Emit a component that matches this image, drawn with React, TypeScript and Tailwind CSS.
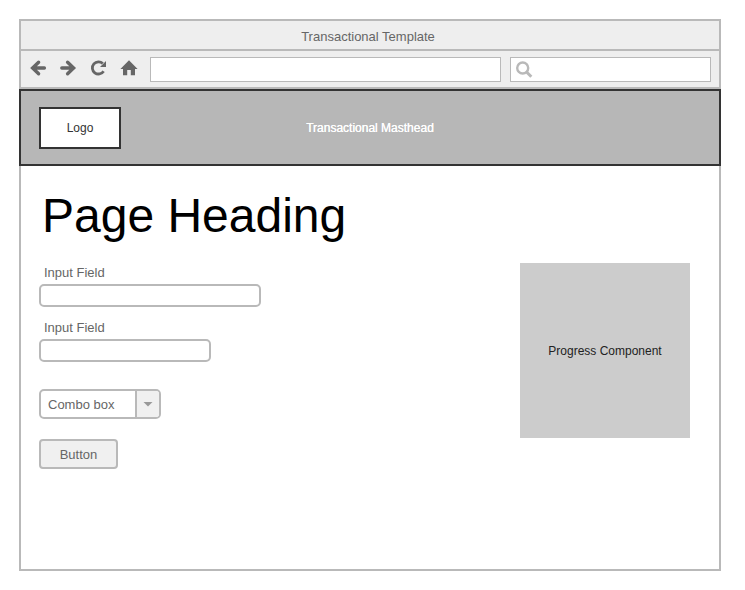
import React from "react";

const field = "block h-[23px] rounded-[5px] border-2 border-[#b9b9b9] bg-white px-2 text-[13px] text-[#666] outline-none";

function ToolButton({ label, children }: { label: string; children: React.ReactNode }) {
  return (
    <button type="button" aria-label={label} className="flex size-5 items-center justify-center text-[#666]">
      {children}
    </button>
  );
}

export default function App() {
  return (
    <div className="flex min-h-screen flex-col bg-white pt-[19px] pr-6 pb-[19px] pl-[19px] font-['Liberation_Sans',Arial,sans-serif] text-[13px] text-[#666]">
      <div className="flex h-8 items-center justify-center border-2 border-[#b9b9b9] bg-[#eee] pt-1 pr-1">
        Transactional Template
      </div>
      <nav className="flex items-start border-x-2 border-b-2 border-[#b9b9b9] bg-[#eee] pt-1.5 pr-2 pb-[5px] pl-[7px]">
        <div className="mr-3 flex gap-2.5">
          <ToolButton label="Back">
            <svg width="20" height="20" viewBox="0 0 20 20" fill="none" stroke="currentColor" strokeWidth="3.4">
              <path d="M16.4 11H5M10.6 5.2L4.6 11L10.6 16.8" strokeLinecap="round" />
            </svg>
          </ToolButton>
          <ToolButton label="Forward">
            <svg width="20" height="20" viewBox="0 0 20 20" fill="none" stroke="currentColor" strokeWidth="3.4">
              <path d="M3.8 11H15M9.6 5.2L15.6 11L9.6 16.8" strokeLinecap="round" />
            </svg>
          </ToolButton>
          <ToolButton label="Reload">
            <svg width="20" height="20" viewBox="0 0 20 20" fill="none" stroke="currentColor" strokeWidth="2.8">
              <path d="M15.6 14.2A6.1 6.1 0 1 1 14.8 6.6" />
              <path d="M18 4V10H12Z" fill="currentColor" stroke="none" />
            </svg>
          </ToolButton>
          <ToolButton label="Home">
            <svg width="20" height="20" viewBox="0 0 20 20" fill="currentColor">
              <path d="M11 3.2L19.6 12H17V18.2H12.8V13H9.2V18.2H5V12H2.4Z" />
            </svg>
          </ToolButton>
        </div>
        <input aria-label="Address" className="h-[25px] min-w-0 flex-1 border border-[#b9b9b9] bg-white px-2 outline-none" />
        <div className="ml-[9px] flex h-[25px] w-[201px] items-center border border-[#b9b9b9] bg-white pl-[5px]">
          <svg width="17" height="17" viewBox="0 0 17 17" fill="none" stroke="#b9b9b9" aria-hidden="true">
            <circle cx="6.7" cy="7" r="5.5" strokeWidth="2.4" />
            <path d="M10.6 11L15.3 15.7" strokeWidth="3" />
          </svg>
          <input type="search" aria-label="Search" className="h-full min-w-0 flex-1 px-1 outline-none" />
        </div>
      </nav>
      <header className="grid h-[77px] grid-cols-[1fr_auto_1fr] items-center border-2 border-[#333] bg-[#b7b7b7] px-[18px] text-xs">
        <div className="flex h-[42px] w-[82px] items-center justify-center border-2 border-[#333] bg-white text-[#333]">
          Logo
        </div>
        <span className="text-white [text-shadow:0_0_0_white]">Transactional Masthead</span>
      </header>
      <main className="flex-1 border-x-2 border-b-2 border-[#b9b9b9] pt-[26px] pr-[29px] pl-[18px]">
        <h1 className="pl-[3px] text-5xl leading-[48px] text-black">Page Heading</h1>
        <div className="mt-[23px] flex items-start justify-between">
          <form className="flex flex-col items-start">
            <label htmlFor="first" className="mb-px pl-[5px] leading-5">Input Field</label>
            <input id="first" className={field + " w-[222px]"} />
            <label htmlFor="second" className="mt-[11px] mb-px pl-[5px] leading-5">Input Field</label>
            <input id="second" className={field + " w-[172px]"} />
            <div className="relative mt-[27px] h-[30px] w-[122px]">
              <select aria-label="Combo box" className="size-full appearance-none rounded-[5px] border-2 border-[#b9b9b9] bg-white pt-px pl-[7px] outline-none">
                <option>Combo box</option>
              </select>
              <span className="pointer-events-none absolute inset-y-0.5 right-0.5 flex w-6 items-center justify-center rounded-r-[3px] border-l-2 border-[#b9b9b9] bg-[#f0f0f0]">
                <svg width="10" height="5" viewBox="0 0 10 5" fill="#999"><path d="M0.5 0H9.5L5 4.5Z" /></svg>
              </span>
            </div>
            <button type="button" className="mt-5 h-[30px] w-[79px] rounded-[4px] border-2 border-[#b9b9b9] bg-[#f0f0f0] pt-0.5">
              Button
            </button>
          </form>
          <aside className="flex h-[175px] w-[170px] items-center justify-center bg-[#ccc] text-xs text-[#222]">
            Progress Component
          </aside>
        </div>
      </main>
    </div>
  );
}
